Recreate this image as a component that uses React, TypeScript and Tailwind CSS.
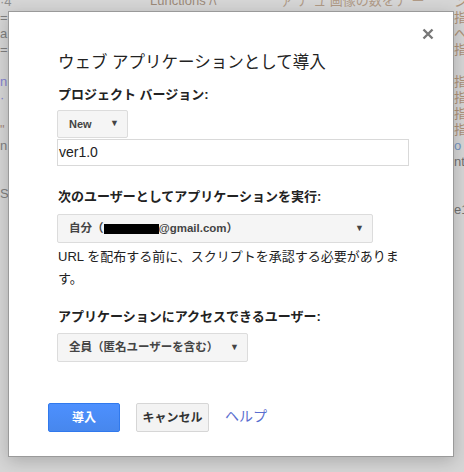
import React from "react";

const font = { fontFamily: '"Liberation Sans", Arial, "Noto Sans CJK JP", sans-serif' };

function Arrow() {
  return <span className="text-[9px] text-[#444]">▼</span>;
}

export default function App() {
  const leftLines = [
    { t: "·4", c: "text-[#888]" },
    { t: "=", c: "text-[#777]" },
    { t: "a", c: "text-[#777]" },
    { t: "=", c: "text-[#777]" },
    { t: "", c: "" },
    { t: "n", c: "text-[#7a7ad0]" },
    { t: "·", c: "text-[#7a7ad0]" },
    { t: "", c: "" },
    { t: "\"", c: "text-[#a08070]" },
    { t: "n", c: "text-[#777]" },
    { t: "", c: "" },
    { t: "", c: "" },
    { t: "S", c: "text-[#777]" },
  ];
  const rightLines = [
    { t: "ン", c: "text-[#a98a6e]" },
    { t: "指", c: "text-[#a98a6e]" },
    { t: "へ", c: "text-[#a98a6e]" },
    { t: "指", c: "text-[#a98a6e]" },
    { t: "", c: "" },
    { t: "指", c: "text-[#a98a6e]" },
    { t: "指", c: "text-[#a98a6e]" },
    { t: "指", c: "text-[#a98a6e]" },
    { t: "指", c: "text-[#a98a6e]" },
    { t: "o", c: "text-[#6b8fc0]" },
    { t: "nt", c: "text-[#666]" },
    { t: "", c: "" },
    { t: "", c: "" },
    { t: "e1", c: "text-[#666]" },
  ];

  return (
    <div className="relative w-[464px] h-[472px] overflow-hidden bg-[#d6d6d6]" style={font}>
      {/* background editor (dimmed) */}
      <div className="absolute left-0 top-[-6px] w-[464px] text-[13px] leading-[16px] opacity-90">
        <div className="flex justify-between">
          <div className="flex flex-col">
            {leftLines.map((l, i) => (
              <div key={i} className={`h-[16px] ${l.c}`}>{l.t || "\u00a0"}</div>
            ))}
          </div>
          <div className="flex flex-col items-start w-[10px] overflow-hidden">
            {rightLines.map((l, i) => (
              <div key={i} className={`h-[16px] whitespace-nowrap ${l.c}`}>{l.t || "\u00a0"}</div>
            ))}
          </div>
        </div>
      </div>
      <div className="absolute left-[150px] top-[-9px] text-[13px] text-[#9c8a7a] whitespace-nowrap">
        Lunctions /\
      </div>
      <div className="absolute left-[280px] top-[-9px] text-[13px] text-[#b09a86] whitespace-nowrap">
        ァ デ ュ 画像の数をデ ー
      </div>

      {/* dialog */}
      <div className="absolute left-[8px] top-[11px] w-[446px] h-[446px] bg-white border border-[#9a9a9a] shadow-[0_4px_16px_rgba(0,0,0,0.2)] text-[#222]">
        <button className="absolute right-[19px] top-[16px] w-[12px] h-[12px] flex items-center justify-center">
          <svg width="12" height="12" viewBox="0 0 12 12">
            <path d="M1.5 1.5 L10.5 10.5 M10.5 1.5 L1.5 10.5" stroke="#777" strokeWidth="2.4" />
          </svg>
        </button>

        <div className="pl-[48px] pr-[46px] pt-[39px]">
          <div className="pl-[1px] text-[16.5px] leading-[22px] text-[#222]">ウェブ アプリケーションとして導入</div>

          <div className="pl-[1px] mt-[13px] text-[13px] font-bold leading-[18px]">プロジェクト バージョン:</div>
          <div className="mt-[6px] w-[71px] h-[28px] border border-[#dcdcdc] bg-[#f5f5f5] rounded-[2px] flex items-center justify-between pl-[11px] pr-[8px]">
            <span className="text-[11px] font-bold text-[#444]">New</span>
            <Arrow />
          </div>
          <div className="mt-[1px] w-[352px] h-[27px] border border-[#d9d9d9] flex items-center pl-[1px] text-[14px] text-[#222]">
            ver1.0
          </div>

          <div className="pl-[1px] mt-[22px] text-[13px] font-bold leading-[18px]">次のユーザーとしてアプリケーションを実行:</div>
          <div className="mt-[8px] w-[316px] h-[29px] border border-[#dcdcdc] bg-[#f5f5f5] rounded-[2px] flex items-center justify-between pl-[11px] pr-[8px]">
            <span className="flex items-center text-[11.5px] font-bold text-[#444]">
              自分（<span className="inline-block w-[55px] h-[10px] bg-black" />@gmail.com）
            </span>
            <Arrow />
          </div>
          <div className="pl-[1px] mt-[3px] w-[352px] text-[13px] leading-[22px] text-[#222] whitespace-nowrap">
            URL を配布する前に、スクリプトを承認する必要がありま
            <br />
            す。
          </div>

          <div className="pl-[1px] mt-[18px] text-[13px] font-bold leading-[18px]">アプリケーションにアクセスできるユーザー:</div>
          <div className="mt-[7px] w-[191px] h-[29px] border border-[#dcdcdc] bg-[#f5f5f5] rounded-[2px] flex items-center justify-between pl-[11px] pr-[8px]">
            <span className="text-[11.5px] font-bold text-[#444]">全員（匿名ユーザーを含む）</span>
            <Arrow />
          </div>
        </div>

        <div className="pl-[39px] mt-[41px] flex items-center">
          <button className="w-[72px] h-[29px] rounded-[2px] border border-[#3079ed] bg-[linear-gradient(#4d90fe,#4787ed)] text-white text-[12px] font-bold">
            導入
          </button>
          <button className="ml-[16px] w-[73px] h-[29px] rounded-[2px] border border-[#d6d6d6] bg-[#f3f3f3] text-[#333] text-[12px] font-bold">
            キャンセル
          </button>
          <span className="ml-[16px] text-[14px] text-[#5a6ecf] -mt-[3px]">ヘルプ</span>
        </div>
      </div>
    </div>
  );
}
